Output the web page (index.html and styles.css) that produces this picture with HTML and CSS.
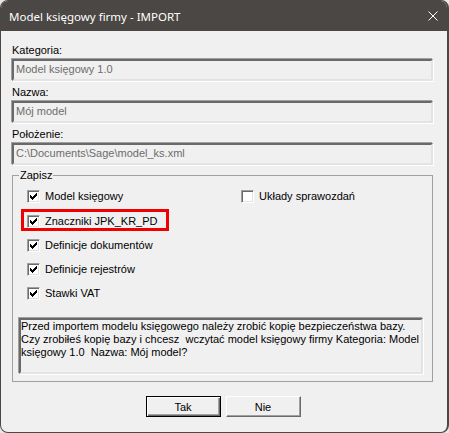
FILE: index.html
```html
<!DOCTYPE html>
<html>
    <head>
        <meta charset="UTF-8">
        <meta name="viewport" content="width=device-width, initial-scale=1">
        <link rel="stylesheet" href="styles.css">
    </head>
    <body>
        <div class="window">
            <div class="titlebar">
                <span class="title">Model księgowy firmy - IMPORT</span>
                <svg class="close" width="10" height="10" viewBox="0 0 10 10">
                    <path d="M0.5 0.5 L9.5 9.5 M9.5 0.5 L0.5 9.5" stroke="#fff" stroke-width="1"/>
                </svg>
            </div>

            <div class="content">
                <div class="fields">
                    <div class="field-row">
                        <div class="label">Kategoria:</div>
                        <div class="input">Model księgowy 1.0</div>
                    </div>
                    <div class="field-row">
                        <div class="label">Nazwa:</div>
                        <div class="input">Mój model</div>
                    </div>
                    <div class="field-row">
                        <div class="label">Położenie:</div>
                        <div class="input">C:\Documents\Sage\model_ks.xml</div>
                    </div>
                </div>

                <fieldset class="group">
                    <legend>Zapisz</legend>
                    <div class="options">
                        <div class="col">
                            <div class="check"><span class="box"><svg width="9" height="9" viewBox="0 0 9 9" shape-rendering="crispEdges"><path d="M1 3h1v3h-1z M2 4h1v3h-1z M3 5h1v3h-1z M4 4h1v3h-1z M5 3h1v3h-1z M6 2h1v3h-1z M7 1h1v3h-1z" fill="#000"/></svg></span>Model księgowy</div>
                            <div class="check marked"><span class="box"><svg width="9" height="9" viewBox="0 0 9 9" shape-rendering="crispEdges"><path d="M1 3h1v3h-1z M2 4h1v3h-1z M3 5h1v3h-1z M4 4h1v3h-1z M5 3h1v3h-1z M6 2h1v3h-1z M7 1h1v3h-1z" fill="#000"/></svg></span>Znaczniki JPK_KR_PD</div>
                            <div class="check"><span class="box"><svg width="9" height="9" viewBox="0 0 9 9" shape-rendering="crispEdges"><path d="M1 3h1v3h-1z M2 4h1v3h-1z M3 5h1v3h-1z M4 4h1v3h-1z M5 3h1v3h-1z M6 2h1v3h-1z M7 1h1v3h-1z" fill="#000"/></svg></span>Definicje dokumentów</div>
                            <div class="check"><span class="box"><svg width="9" height="9" viewBox="0 0 9 9" shape-rendering="crispEdges"><path d="M1 3h1v3h-1z M2 4h1v3h-1z M3 5h1v3h-1z M4 4h1v3h-1z M5 3h1v3h-1z M6 2h1v3h-1z M7 1h1v3h-1z" fill="#000"/></svg></span>Definicje rejestrów</div>
                            <div class="check"><span class="box"><svg width="9" height="9" viewBox="0 0 9 9" shape-rendering="crispEdges"><path d="M1 3h1v3h-1z M2 4h1v3h-1z M3 5h1v3h-1z M4 4h1v3h-1z M5 3h1v3h-1z M6 2h1v3h-1z M7 1h1v3h-1z" fill="#000"/></svg></span>Stawki VAT</div>
                        </div>
                        <div class="col">
                            <div class="check"><span class="box"></span>Układy sprawozdań</div>
                        </div>
                    </div>

                    <div class="message">Przed importem modelu księgowego należy zrobić kopię bezpieczeństwa bazy.<br>Czy zrobiłeś kopię bazy i chcesz&nbsp; wczytać model księgowy firmy Kategoria: Model<br>księgowy 1.0&nbsp; Nazwa: Mój model?</div>
                </fieldset>

                <div class="buttons">
                    <button class="btn default">Tak</button>
                    <button class="btn">Nie</button>
                </div>
            </div>
        </div>
    </body>
</html>
```

FILE: styles.css
```css
html {
    background: #e6e6e6;
}

body {
    margin: 0;
    font-family: "Liberation Sans", Arial, sans-serif;
    font-size: 11px;
    color: #000;
}

* {
    box-sizing: border-box;
}

/* Window frame */
.window {
    width: 449px;
    height: 433px;
    background: #f0f0f0;
    border: 1px solid #4a4744;
    border-right-width: 2px;
    border-radius: 8px;
    overflow: hidden;
    display: flex;
    flex-direction: column;
}

.titlebar {
    height: 30px;
    background: #4a4744;
    display: flex;
    align-items: center;
    justify-content: space-between;
    padding: 0 9px 0 8px;
    flex-shrink: 0;
}

.title {
    font-family: "Noto Sans", sans-serif;
    font-size: 11.5px;
    color: #fff;
}

.close {
    display: block;
}

/* Dialog body */
.content {
    padding: 12px 14px 0 11px;
}

.fields {
    display: flex;
    flex-direction: column;
    gap: 4px;
}

.label {
    height: 14px;
    line-height: 14px;
    margin-bottom: 2px;
    white-space: nowrap;
}

/* Sunken, read-only edit box */
.input,
.message {
    border: 2px solid;
    border-color: #696969 #e3e3e3 #e3e3e3 #696969;
    box-shadow: -1px -1px 0 #a0a0a0, 1px 1px 0 #fff;
    background: #f0f0f0;
}

.input {
    height: 22px;
    line-height: 16px;
    padding: 0 2px;
    color: #6d6d6d;
    white-space: nowrap;
}

/* Group box */
.group {
    margin: 3px 0 0 0;
    padding: 8px 9px 7px 6px;
    border: 1px solid #a0a0a0;
    min-width: 0;
}

.group legend {
    padding: 0 1px;
    margin: 0;
    line-height: 14px;
}

.options {
    display: grid;
    grid-template-columns: 214px 1fr;
    padding-left: 8px;
}

.col {
    display: flex;
    flex-direction: column;
    gap: 11px;
}

.check {
    display: flex;
    align-items: center;
    gap: 5px;
    height: 13px;
    line-height: 13px;
    white-space: nowrap;
}

/* The red highlight frame round one option */
.check.marked {
    align-self: flex-start;
    align-items: flex-end;
    height: 22px;
    border: 3px solid #f00000;
    padding: 0 8px 0 3px;
    margin: -5px 0 -3px -6px;
}

.box {
    width: 13px;
    height: 13px;
    flex-shrink: 0;
    background: #fff;
    border: 1px solid;
    border-color: #a0a0a0 #fff #fff #a0a0a0;
    box-shadow: inset 1px 1px 0 #696969, inset -1px -1px 0 #e3e3e3;
    padding: 1px;
}

.box svg {
    display: block;
}

.message {
    margin: 18px 0 0 0;
    height: 56px;
    line-height: 13px;
    padding: 0;
    white-space: nowrap;
    overflow: hidden;
}

/* Buttons */
.buttons {
    display: flex;
    justify-content: center;
    gap: 5px;
    margin-top: 14px;
    padding-left: 1px;
}

.btn {
    width: 75px;
    height: 21px;
    padding: 0;
    font-family: "Liberation Sans", Arial, sans-serif;
    font-size: 11px;
    color: #000;
    background: #f0f0f0;
    border: 1px solid;
    border-color: #fff #696969 #696969 #fff;
    box-shadow: inset -1px -1px 0 #a0a0a0;
}

.btn.default {
    border-color: #000;
    box-shadow: inset 1px 1px 0 #fff, inset -1px -1px 0 #696969, inset -2px -2px 0 #a0a0a0;
}
```
